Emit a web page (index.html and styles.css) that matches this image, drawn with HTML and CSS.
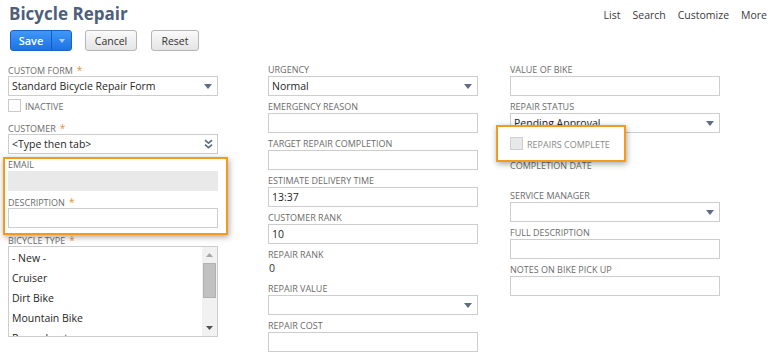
FILE: index.html
```html
<!DOCTYPE html>
<html lang="en">
<head>
<meta charset="utf-8">
<title>Bicycle Repair</title>
<link rel="stylesheet" href="styles.css">
</head>
<body>
<div class="page">
  <header class="top">
    <h1 class="title">Bicycle Repair</h1>
    <nav class="links">
      <span>List</span><span>Search</span><span>Customize</span><span>More</span>
    </nav>
  </header>

  <div class="actions">
    <div class="btn-split">
      <span class="btn-save">Save</span>
      <span class="btn-arrow"><svg width="6" height="4" viewBox="0 0 6 4"><path d="M0 0H6L3 4Z" fill="#b7cdf0"/></svg></span>
    </div>
    <span class="btn btn-cancel">Cancel</span>
    <span class="btn btn-reset">Reset</span>
  </div>

  <div class="form">
    <div class="col">
      <div class="field">
        <label class="lbl">Custom Form<span class="req">*</span></label>
        <div class="input select"><span>Standard Bicycle Repair Form</span><svg class="dd" width="8" height="5" viewBox="0 0 8 5"><path d="M0 0H8L4 5Z"/></svg></div>
      </div>
      <div class="check-row inactive">
        <span class="box"></span><span class="lbl">Inactive</span>
      </div>
      <div class="field">
        <label class="lbl">Customer<span class="req">*</span></label>
        <div class="input select"><span>&lt;Type then tab&gt;</span><svg class="chev" width="9" height="10" viewBox="0 0 9 10"><path d="M1 1.2L4.5 4.2L8 1.2M1 5.6L4.5 8.6L8 5.6" fill="none" stroke="#5f6d84" stroke-width="1.7"/></svg></div>
      </div>
      <div class="highlight hl-left">
        <div class="field">
          <label class="lbl">Email</label>
          <div class="input readonly"></div>
        </div>
        <div class="field">
          <label class="lbl">Description<span class="req">*</span></label>
          <div class="input"></div>
        </div>
      </div>
      <div class="field">
        <label class="lbl">Bicycle Type<span class="req">*</span></label>
        <div class="listbox">
          <div class="options">
            <div class="option">- New -</div>
            <div class="option">Cruiser</div>
            <div class="option">Dirt Bike</div>
            <div class="option">Mountain Bike</div>
            <div class="option">Recumbent</div>
          </div>
          <div class="scrollbar">
            <span class="sb-btn"><svg width="7" height="4" viewBox="0 0 7 4"><path d="M0 4H7L3.5 0Z" fill="#a6a6a6"/></svg></span>
            <span class="sb-thumb"></span>
            <span class="sb-btn sb-down"><svg width="7" height="4" viewBox="0 0 7 4"><path d="M0 0H7L3.5 4Z" fill="#505050"/></svg></span>
          </div>
        </div>
      </div>
    </div>

    <div class="col">
      <div class="field">
        <label class="lbl">Urgency</label>
        <div class="input select"><span>Normal</span><svg class="dd" width="8" height="5" viewBox="0 0 8 5"><path d="M0 0H8L4 5Z"/></svg></div>
      </div>
      <div class="field">
        <label class="lbl">Emergency Reason</label>
        <div class="input"></div>
      </div>
      <div class="field">
        <label class="lbl">Target Repair Completion</label>
        <div class="input"></div>
      </div>
      <div class="field">
        <label class="lbl">Estimate Delivery Time</label>
        <div class="input"><span>13:37</span></div>
      </div>
      <div class="field">
        <label class="lbl">Customer Rank</label>
        <div class="input"><span>10</span></div>
      </div>
      <div class="field">
        <label class="lbl">Repair Rank</label>
        <div class="value">0</div>
      </div>
      <div class="field">
        <label class="lbl">Repair Value</label>
        <div class="input select"><span></span><svg class="dd" width="8" height="5" viewBox="0 0 8 5"><path d="M0 0H8L4 5Z"/></svg></div>
      </div>
      <div class="field">
        <label class="lbl">Repair Cost</label>
        <div class="input"></div>
      </div>
    </div>

    <div class="col">
      <div class="field">
        <label class="lbl">Value of Bike</label>
        <div class="input"></div>
      </div>
      <div class="field">
        <label class="lbl">Repair Status</label>
        <div class="input select"><span>Pending Approval</span><svg class="dd" width="8" height="5" viewBox="0 0 8 5"><path d="M0 0H8L4 5Z"/></svg></div>
      </div>
      <div class="highlight hl-right">
        <div class="check-row">
          <span class="box disabled"></span><span class="lbl faded">Repairs Complete</span>
        </div>
      </div>
      <div class="field completion">
        <label class="lbl">Completion Date</label>
        <div class="empty-value"></div>
      </div>
      <div class="field">
        <label class="lbl">Service Manager</label>
        <div class="input select"><span></span><svg class="dd" width="8" height="5" viewBox="0 0 8 5"><path d="M0 0H8L4 5Z"/></svg></div>
      </div>
      <div class="field">
        <label class="lbl">Full Description</label>
        <div class="input"></div>
      </div>
      <div class="field">
        <label class="lbl">Notes on Bike Pick Up</label>
        <div class="input"></div>
      </div>
    </div>
  </div>
</div>
</body>
</html>
```

FILE: styles.css
```css
* { box-sizing: border-box; }
html, body { margin: 0; background: #fff; }
body {
  font-family: "Open Sans", "Liberation Sans", sans-serif;
  color: #262626;
  width: 775px;
  height: 354px;
  overflow: hidden;
}
.page { padding-right: 8px; }

.top {
  display: flex;
  justify-content: space-between;
  align-items: flex-start;
  height: 30px;
}
.title {
  margin: 2px 0 0 9px;
  font-size: 17px;
  font-weight: 700;
  line-height: 24px;
  color: #4d5f7a;
}
.links {
  display: flex;
  gap: 12px;
  padding-top: 8px;
  font-size: 10.5px;
  line-height: 14px;
  color: #3a3a3a;
}

.actions {
  display: flex;
  padding-left: 10px;
  height: 21px;
}
.btn-split {
  display: flex;
  width: 62px;
  height: 21px;
  border: 1px solid #1b60c6;
  border-radius: 3px;
  background: linear-gradient(#3f98f8, #1e72e4);
}
.btn-save {
  width: 41px;
  display: flex;
  align-items: center;
  justify-content: center;
  color: #fff;
  font-size: 11px;
  font-weight: 600;
  border-right: 1px solid #1859bb;
}
.btn-arrow {
  flex: 1;
  display: flex;
  align-items: center;
  justify-content: center;
}
.btn {
  height: 21px;
  display: flex;
  align-items: center;
  justify-content: center;
  border: 1px solid #b5b5b5;
  border-radius: 3px;
  background: linear-gradient(#fafafa, #e4e4e4);
  font-size: 10.5px;
  color: #333;
}
.btn-cancel { width: 52px; margin-left: 13px; }
.btn-reset { width: 48px; margin-left: 14px; }

.form {
  display: grid;
  grid-template-columns: 260px 242px 210px;
  padding-left: 8px;
  margin-top: 13px;
  align-items: start;
}
.col {
  display: flex;
  flex-direction: column;
  gap: 5px;
}
.field {
  display: flex;
  flex-direction: column;
}
.lbl {
  display: block;
  font-size: 9px;
  line-height: 12px;
  height: 12px;
  text-transform: uppercase;
  color: #6b6b6b;
  white-space: nowrap;
}
.req {
  color: #e28f35;
  margin-left: 4px;
  font-size: 10px;
}
.input {
  width: 210px;
  height: 20px;
  border: 1px solid #cdcdcd;
  background: #fff;
  padding: 0 5px 0 3px;
  font-size: 10.5px;
  line-height: 18px;
  color: #262626;
  display: flex;
  align-items: center;
  justify-content: space-between;
  white-space: nowrap;
  overflow: hidden;
}
.dd { fill: #5f6d84; flex: none; }
.chev { flex: none; margin-right: -1px; }
.readonly {
  background: #e9e9e9;
  border-color: #e9e9e9;
}
.value {
  font-size: 10.5px;
  line-height: 14px;
  height: 17px;
  padding-left: 1px;
  color: #333;
}

.check-row {
  display: flex;
  align-items: flex-end;
  gap: 4px;
  height: 13px;
}
.check-row .lbl { line-height: 11px; height: 11px; }
.inactive { margin: -2px 0 5px; }
.box {
  width: 13px;
  height: 13px;
  border: 1px solid #c9c9c9;
  background: #fff;
  flex: none;
}
.box.disabled { background: #e8e8e8; border-color: #cfcfcf; }
.lbl.faded { color: #8c8a88; }

.highlight {
  position: relative;
  z-index: 1;
  border: 2px solid #f59b1c;
  box-shadow: 1px 2px 6px rgba(0, 0, 0, 0.35);
}
.hl-left {
  width: 225px;
  margin: -2px 0 -6px -5px;
  padding: 0 8px 5px 3px;
  display: flex;
  flex-direction: column;
  gap: 5px;
}
.hl-right {
  width: 130px;
  margin: -13px 0 0 -14px;
  padding: 10px 0 10px 12px;
  background: #fff;
}
.completion { margin-top: -7px; }
.empty-value { height: 13px; }

.listbox {
  width: 210px;
  height: 91px;
  border: 1px solid #cdcdcd;
  display: flex;
  overflow: hidden;
}
.options { flex: 1; padding-top: 1px; }
.option {
  height: 20px;
  line-height: 20px;
  padding-left: 3px;
  font-size: 10.5px;
  color: #262626;
  white-space: nowrap;
}
.scrollbar {
  width: 15px;
  background: #f1f1f1;
  display: flex;
  flex-direction: column;
  align-items: center;
}
.sb-btn {
  height: 16px;
  width: 15px;
  display: flex;
  align-items: center;
  justify-content: center;
  flex: none;
}
.sb-thumb {
  width: 13px;
  height: 35px;
  background: #c1c1c1;
  border: 1px solid #b1b1b1;
  flex: none;
}
.sb-down { margin-top: auto; }
```
